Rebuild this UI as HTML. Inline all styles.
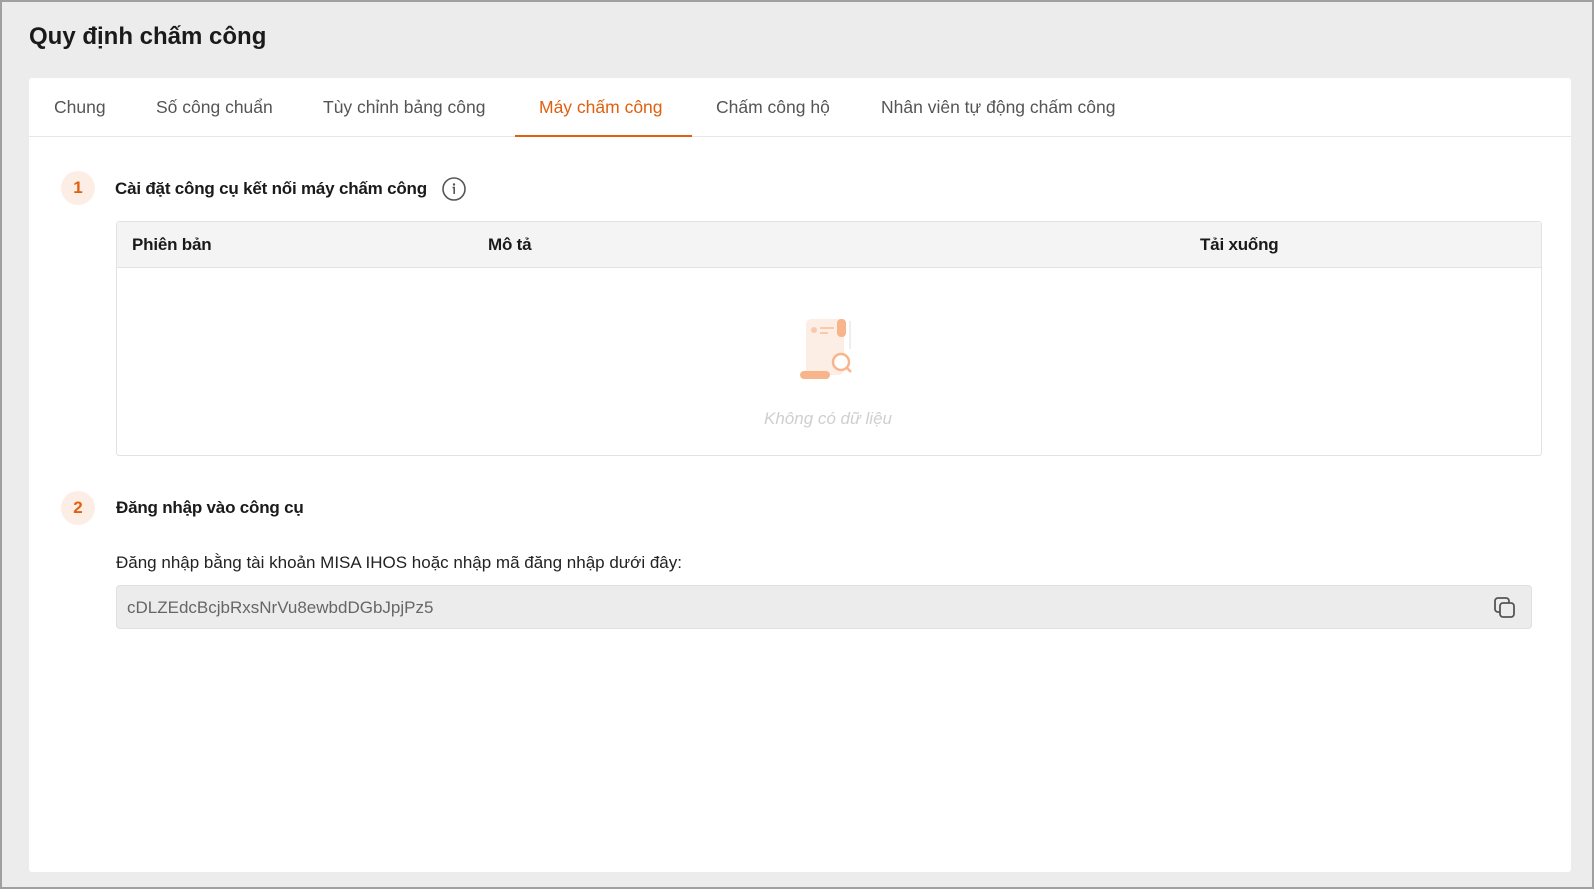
<!DOCTYPE html>
<html><head><meta charset="utf-8"><style>
*{box-sizing:border-box;margin:0;padding:0}
body{width:1594px;height:889px;background:#ececec;font-family:"Liberation Sans",sans-serif;position:relative;overflow:hidden;border:2px solid #a0a0a0}
.a{position:absolute;white-space:nowrap}
.title{left:27px;top:21px;font-size:24px;font-weight:bold;color:#1a1a1a}
.card{left:27px;top:76px;width:1542px;height:794px;background:#fff;border-radius:3px}
.tab{top:95px;font-size:17.5px;color:#555}
.step{width:34px;height:34px;border-radius:50%;background:#fdeee5;color:#e0600f;font-weight:bold;font-size:17px;text-align:center;line-height:34px}
.h{font-size:17px;font-weight:bold;color:#1a1a1a;letter-spacing:-0.2px}
</style></head><body>
<div class="a title">Quy định chấm công</div>
<div class="a card"></div>
<div class="a" style="left:27px;top:134px;width:1542px;height:1px;background:#e6e6e6"></div>
<div class="a tab" style="left:52px">Chung</div>
<div class="a tab" style="left:154px">Số công chuẩn</div>
<div class="a tab" style="left:321px">Tùy chỉnh bảng công</div>
<div class="a tab" style="left:537px;color:#e0600f">Máy chấm công</div>
<div class="a tab" style="left:714px">Chấm công hộ</div>
<div class="a tab" style="left:879px">Nhân viên tự động chấm công</div>
<div class="a" style="left:513px;top:133px;width:177px;height:2px;background:#e0600f"></div>

<div class="a step" style="left:59px;top:169px">1</div>
<div class="a h" style="left:113px;top:177px">Cài đặt công cụ kết nối máy chấm công</div>
<svg class="a" style="left:439px;top:174px" width="26" height="26" viewBox="0 0 26 26"><circle cx="13" cy="13" r="11" fill="none" stroke="#555" stroke-width="1.6"/><circle cx="13" cy="8.5" r="1.2" fill="#555"/><path d="M11.5 11.5h1.7v6.5" fill="none" stroke="#555" stroke-width="1.6"/></svg>

<div class="a" style="left:114px;top:219px;width:1426px;height:235px;border:1px solid #e2e2e2;border-radius:3px"></div>
<div class="a" style="left:115px;top:220px;width:1424px;height:46px;background:#f4f4f4;border-bottom:1px solid #e2e2e2"></div>
<div class="a h" style="left:130px;top:233px">Phiên bản</div>
<div class="a h" style="left:486px;top:233px">Mô tả</div>
<div class="a h" style="left:1198px;top:233px">Tải xuống</div>
<svg class="a" style="left:790px;top:313px" width="75" height="75" viewBox="0 0 75 75">
<rect x="14" y="4" width="38" height="56" rx="5" fill="#fdeee5"/>
<rect x="45" y="4" width="9" height="18" rx="4" fill="#f8b58c"/>
<line x1="58" y1="6" x2="58" y2="34" stroke="#eee" stroke-width="2"/>
<circle cx="22" cy="15" r="3" fill="#f8c9ab"/>
<rect x="28" y="12" width="14" height="2" fill="#f8c9ab"/><rect x="28" y="17" width="8" height="2" fill="#f8c9ab"/>
<circle cx="49" cy="47" r="8" fill="#fff" stroke="#f8b58c" stroke-width="2.5"/>
<line x1="55" y1="53" x2="59" y2="57" stroke="#f8b58c" stroke-width="2.5"/>
<rect x="8" y="56" width="30" height="8" rx="4" fill="#f8b58c"/>
</svg>
<div class="a" style="left:762px;top:407px;font-size:17px;font-style:italic;color:#cfcfcf">Không có dữ liệu</div>

<div class="a step" style="left:59px;top:489px">2</div>
<div class="a h" style="left:114px;top:496px">Đăng nhập vào công cụ</div>
<div class="a" style="left:114px;top:551px;font-size:17px;color:#222">Đăng nhập bằng tài khoản MISA IHOS hoặc nhập mã đăng nhập dưới đây:</div>
<div class="a" style="left:114px;top:583px;width:1416px;height:44px;background:#ececec;border:1px solid #e0e0e0;border-radius:4px"></div>
<div class="a" style="left:125px;top:596px;font-size:17px;color:#666">cDLZEdcBcjbRxsNrVu8ewbdDGbJpjPz5</div>
<svg class="a" style="left:1490px;top:593px" width="26" height="26" viewBox="0 0 26 26"><rect x="3" y="3" width="14" height="14" rx="3" fill="none" stroke="#555" stroke-width="1.8"/><rect x="8" y="8" width="14" height="14" rx="3" fill="#ececec" stroke="#555" stroke-width="1.8"/></svg>
</body></html>
